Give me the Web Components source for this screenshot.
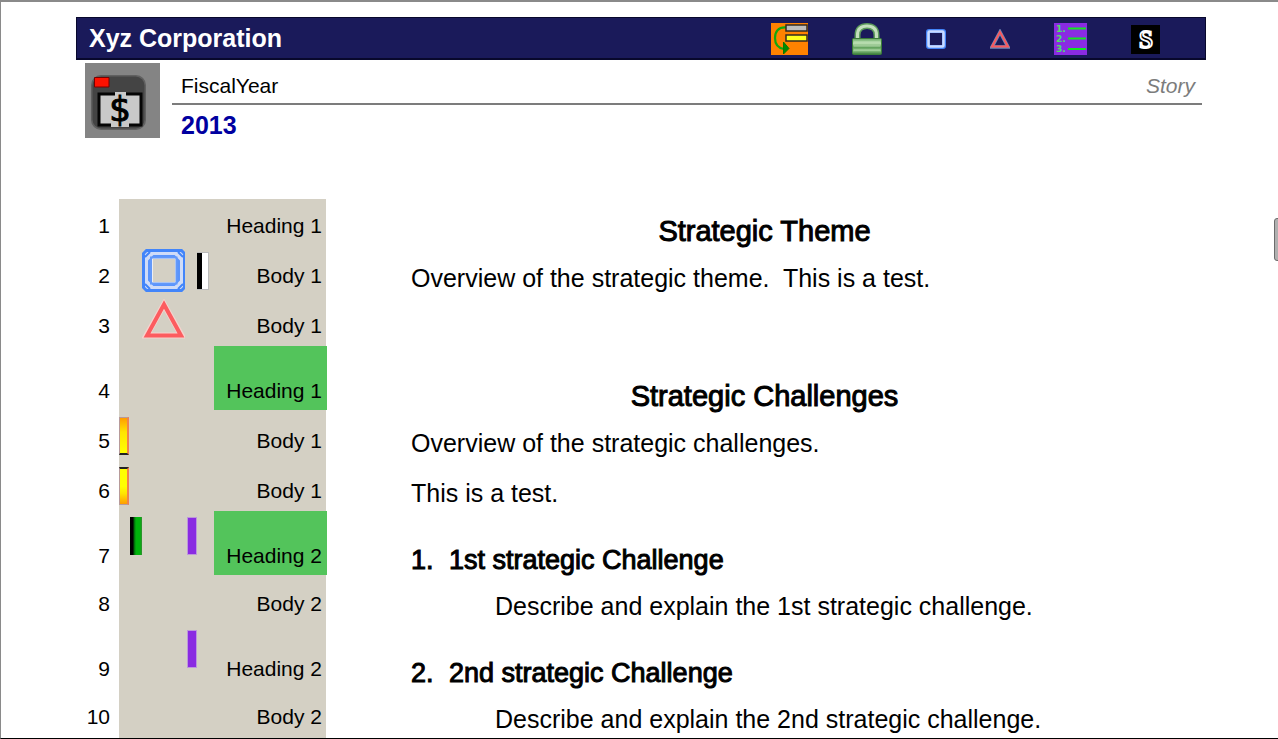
<!DOCTYPE html>
<html lang="en">
<head>
<meta charset="utf-8">
<meta name="viewport" content="width=device-width, initial-scale=1">
<title>Xyz Corporation - Story</title>
<style>
  body { margin: 0; background: #fff; color: #000; font-family: "Liberation Sans", Arial, sans-serif; }
</style>
</head>
<body>
<story-page>
  <app-bar slot="head" heading="Xyz Corporation">
    <tool-button kind="move" label="Move line"></tool-button>
    <tool-button kind="lock" label="Lock"></tool-button>
    <tool-button kind="square" label="Square marker"></tool-button>
    <tool-button kind="triangle" label="Triangle marker"></tool-button>
    <tool-button kind="list" label="Numbered list"></tool-button>
    <tool-button kind="style" label="Style"></tool-button>
  </app-bar>
  <record-head slot="head">
    <span slot="field">FiscalYear</span>
    <span slot="kind">Story</span>
    <span slot="value">2013</span>
  </record-head>
  <story-row n="1" label="Heading 1" level="h1" class="first">Strategic Theme</story-row>
  <story-row n="2" label="Body 1" level="b1" marks="square white">Overview of the strategic theme.&nbsp; This is a test.</story-row>
  <story-row n="3" label="Body 1" level="b1" marks="triangle"></story-row>
  <story-row n="4" label="Heading 1" level="h1" class="spaced" selected>Strategic Challenges</story-row>
  <story-row n="5" label="Body 1" level="b1" marks="start">Overview of the strategic challenges.</story-row>
  <story-row n="6" label="Body 1" level="b1" marks="end">This is a test.</story-row>
  <story-row n="7" label="Heading 2" level="h2" class="spaced" marks="green purple" selected><span slot="num">1.</span>1st strategic Challenge</story-row>
  <story-row n="8" label="Body 2" level="b2" class="tight">Describe and explain the 1st strategic challenge.</story-row>
  <story-row n="9" label="Heading 2" level="h2" class="spaced" marks="purple"><span slot="num">2.</span>2nd strategic Challenge</story-row>
  <story-row n="10" label="Body 2" level="b2" class="tight">Describe and explain the 2nd strategic challenge.</story-row>
</story-page>

<script>
const define = (name, html, setup) => {
  const tpl = document.createElement('template');
  tpl.innerHTML = html;
  customElements.define(name, class extends HTMLElement {
    constructor() {
      super();
      this.attachShadow({ mode: 'open' }).append(tpl.content.cloneNode(true));
    }
    connectedCallback() { if (setup) setup(this, this.shadowRoot); }
  });
};

const ICONS = {
  move: `<svg width="37" height="32" viewBox="0 0 37 32"><path fill="#ff8200" d="M0 0h37v32H0z"/>
    <path d="M15 4.500C7 4 4 9 4 15s3 10 9 11" fill="none" stroke="#12a80c" stroke-width="2.200"/>
    <path d="M12.500 19l5.500 6.500-5.500 5.500z" fill="#008c00" stroke="#0a7a00"/>
    <path fill="#bdbdbd" stroke="#332b20" stroke-width="1.500" d="M15 2h21v6H15z"/>
    <path fill="#ffff1c" stroke="#332b20" stroke-width="1.500" d="M15 12h21v6H15z"/></svg>`,
  lock: `<svg width="30" height="32" viewBox="0 0 30 32"><defs><linearGradient id="g" x2="0" y2="1"><stop stop-color="#6cab68"/><stop offset=".3" stop-color="#b9deb0"/><stop offset=".55" stop-color="#62a25d"/><stop offset=".75" stop-color="#8dc386"/><stop offset="1" stop-color="#357a35"/></linearGradient></defs>
    <path d="M5.500 17v-5C5.500 6 9 3 15 3s9.500 3 9.500 9v5" fill="none" stroke="#5c9a5c" stroke-width="6"/>
    <path d="M5.500 17v-5C5.500 6 9 3 15 3s9.500 3 9.500 9v5" fill="none" stroke="#c3dfbd" stroke-width="3"/>
    <rect x=".5" y="15.500" width="29" height="16" rx="1" fill="url(#g)" stroke="#3b7c3a"/>
    <path d="M2 19h26M2 23h26M2 27h26" stroke="#d2ecca" opacity=".55"/></svg>`,
  square: `<svg width="20" height="20" viewBox="0 0 20 20"><rect x="2" y="2" width="16" height="16" rx="1" fill="#1a1a58" stroke="#4384f8" stroke-width="4"/><rect x="2.500" y="2.500" width="15" height="15" rx="1" fill="none" stroke="#cbdcff" stroke-width="2.500"/></svg>`,
  triangle: `<svg width="20" height="20" viewBox="0 0 20 20"><path d="M10 3L2 18h16z" fill="none" stroke="#6c88b8" stroke-width="3.500"/><path d="M10 3L2 17.500h16z" fill="none" stroke="#f9595d" stroke-width="2"/></svg>`,
  list: `<svg width="33" height="32" viewBox="0 0 33 32"><path fill="#8a2be2" d="M0 0h33v32H0z"/><g fill="#4ce068" font-family="DejaVu Sans" font-weight="bold" font-size="9"><text x="2" y="9">1.</text><text x="2" y="19">2.</text><text x="2" y="29">3.</text></g><path d="M14 5.500h18M14 15.500h18M14 26h18" stroke="#12e620" stroke-width="2"/></svg>`,
  style: `<svg width="29" height="29" viewBox="0 0 29 29"><path d="M0 0h29v29H0z"/><text x="15" y="23" text-anchor="middle" font-family="Liberation Serif" font-weight="bold" font-size="25" stroke="#fff" stroke-width="1.800">S</text></svg>`
};

define('tool-button', `<style>
  :host { display: flex; }
  button { display: flex; margin: 0; padding: 0; border: 0; background: none; cursor: pointer; }
</style><button type="button"></button>`, (el, root) => {
  const b = root.querySelector('button');
  b.setAttribute('aria-label', el.getAttribute('label'));
  b.innerHTML = ICONS[el.getAttribute('kind')];
});

define('app-bar', `<style>
  :host { display: flex; align-items: center; justify-content: space-between; height: 43px; box-sizing: border-box;
    padding: 0 45px 0 12px; color: #fff; background: #1a1a5a; border: 1px solid #08082c; border-bottom-width: 2px; }
  h1 { margin: 0; font-size: 25px; line-height: 40px; }
  nav { display: flex; align-items: center; gap: 44px; padding-top: 2px; }
</style><h1></h1><nav aria-label="Tools"><slot></slot></nav>`, (el, root) => {
  root.querySelector('h1').textContent = el.getAttribute('heading');
});

define('record-head', `<style>
  :host { display: flex; gap: 12px; padding: 3px 4px 0 9px; height: 136px; }
  svg { flex: none; }
  .info { flex: 1; font-size: 21px; }
  .top { display: flex; justify-content: space-between; padding: 6px 7px 0 9px; line-height: 34px; border-bottom: 2px solid #7c7c7c; }
  .kind { color: #7c7c7c; font-style: italic; }
  .value { padding-left: 9px; color: #0000a0; font-size: 25px; font-weight: bold; line-height: 40px; }
</style>
<svg width="75" height="75" viewBox="0 0 75 75"><path fill="#848484" d="M0 0h75v75H0z"/>
  <rect x="6" y="12" width="55" height="55" rx="10" fill="#606060"/><rect x="7.500" y="13.500" width="52" height="52" rx="9" fill="#444"/>
  <path fill="#f10" stroke="#700" d="M9.500 14.500h14.500v9.500H9.500z"/>
  <path fill="#c9c9c9" stroke="#050505" stroke-width="3" d="M14 31h42v31H14z"/><path d="M30 29h11v4H30zM26 60h18v4H26z" fill="#c9c9c9"/>
  <text x="35" y="58" text-anchor="middle" font-family="DejaVu Sans" font-size="34" stroke="#000" stroke-width="1">$</text></svg>
<div class="info"><div class="top"><slot name="field"></slot><span class="kind"><slot name="kind"></slot></span></div><div class="value"><slot name="value"></slot></div></div>`);

const SHAPES = {
  square: `<svg width="43" height="43" viewBox="0 0 43 43"><path d="M4.500 1.500h35l3 3v34l-3 3h-35l-3-3v-34z" fill="#cfdcf8" stroke="#4285fa" stroke-width="3"/><path d="M3 8l5-5M36 3l5 5M3 35l5 5M36 40l5-5" stroke="#4285fa" stroke-width="2"/><path d="M12 7.500h20l4.500 4.500v19L32 35.500H12L7.500 31V12z" fill="none" stroke="#5a94fc" stroke-width="3"/><path d="M10.500 9.500h23v24h-23z" fill="#d4d0c4" stroke="#eceef4" stroke-width="1"/><path d="M9 8.500h25.500v26H9z" fill="none" stroke="#6399fa" stroke-width="2"/></svg>`,
  triangle: `<svg width="43" height="43" viewBox="0 0 43 43"><path d="M22 5.500L4.500 36.500h35z" fill="none" stroke="#f6d2cd" stroke-width="6"/><path d="M22 5.500L5 36.500h34z" fill="none" stroke="#fc5c5f" stroke-width="4"/></svg>`
};

define('line-mark', `<style>
  :host { display: block; box-sizing: border-box; height: 38px; margin-top: 6px; }
  :host([kind="square"]), :host([kind="triangle"]) { grid-column: 3; height: 43px; margin-top: 3px; }
  :host([kind="start"]), :host([kind="end"]) { grid-column: 1; width: 10px; border: 1px solid #b79a9a; border-right: 2px solid #f0824c; }
  :host([kind="start"]) { border-bottom: 2px solid #222; background: linear-gradient(#ff9d00, #ffe400 40%, #ff0); }
  :host([kind="end"]) { border-top: 2px solid #222; background: linear-gradient(#ff0 50%, #ffe400 70%, #ff9d00); }
  :host([kind="green"]) { grid-column: 2; width: 12px; background: linear-gradient(90deg, #000 3px, #00600a 4px, #00b40c 6px, #00b40c 10px, #3a8b38); }
  :host([kind="purple"]) { grid-column: 4; width: 10px; background: #8a2be2; border: 1px solid #bd97dc; }
  :host([kind="white"]) { grid-column: 5; width: 12px; background: linear-gradient(90deg, #000 5px, #fff 5px); border: 1px solid #bbb; border-left: 0; }
  svg { display: block; }
</style><div></div>`, (el, root) => {
  root.querySelector('div').innerHTML = SHAPES[el.getAttribute('kind')] || '';
});

define('story-row', `<style>
  :host { display: grid; grid-template-columns: 34px 207px minmax(0, 1fr); column-gap: 9px; min-height: 50px; }
  :host(.first) { min-height: 47px; }
  :host(.spaced) { min-height: 65px; }
  :host(.tight) { min-height: 48px; }
  .n, .tag { font-size: 21px; line-height: 40px; text-align: right; }
  .n { align-self: end; }
  .gutter { display: grid; grid-template-columns: 11px 12px 45px 10px 17px minmax(0, 1fr); align-items: start; background: #d4d0c4; }
  .tag { grid-column: 6; grid-row: 1; align-self: stretch; display: flex; align-items: flex-end; justify-content: flex-end; padding-right: 4px; }
  line-mark { grid-row: 1; }
  :host([selected]) .tag { margin: 0 -1px 1px 0; padding-right: 5px; line-height: 38px; background: #53c45b; }
  .text { display: flex; align-self: end; margin: 0; padding: 0 88px 0 76px; font-size: 25px; font-weight: normal; line-height: 35px; }
  :host([level="h1"]) .text { justify-content: center; font-size: 29px; line-height: 30px; -webkit-text-stroke: 1px #000; }
  :host([level="h2"]) .text { font-size: 27px; line-height: 32px; -webkit-text-stroke: 1px #000; }
  :host([level="b2"]) .text { padding-left: 160px; }
  .num { display: none; width: 38px; }
  :host([level="h2"]) .num { display: block; }
</style><span class="n"></span><div class="gutter"><span class="tag"></span></div>`, (el, root) => {
  root.querySelector('.n').textContent = el.getAttribute('n');
  root.querySelector('.tag').textContent = el.getAttribute('label');
  const gutter = root.querySelector('.gutter');
  for (const kind of (el.getAttribute('marks') || '').split(' ').filter(Boolean)) {
    const m = document.createElement('line-mark');
    m.setAttribute('kind', kind);
    gutter.append(m);
  }
  const level = el.getAttribute('level');
  const text = document.createElement(level === 'h1' ? 'h2' : level === 'h2' ? 'h3' : 'p');
  text.className = 'text';
  text.innerHTML = '<span class="num"><slot name="num"></slot></span><span><slot></slot></span>';
  root.append(text);
});

define('story-page', `<style>
  :host { display: flex; flex-direction: column; position: relative; box-sizing: border-box; min-height: 100vh;
    padding: 15px 72px 0 75px; border: solid #8a8a8a; border-width: 2px 0 0 1px; border-bottom: 1px solid #000; overflow: hidden; }
  main { flex: 1; display: flex; flex-direction: column; background: linear-gradient(#d4d0c4, #d4d0c4) 43px 0 / 207px 100% no-repeat; }
  .thumb { position: absolute; right: -4px; top: 216px; width: 8px; height: 43px; box-sizing: border-box; background: #b0b0b0; border: 1px solid #6c6c6c; border-radius: 3px; }
</style><header><slot name="head"></slot></header><main><slot></slot></main><div class="thumb"></div>`);
</script>
</body>
</html>
